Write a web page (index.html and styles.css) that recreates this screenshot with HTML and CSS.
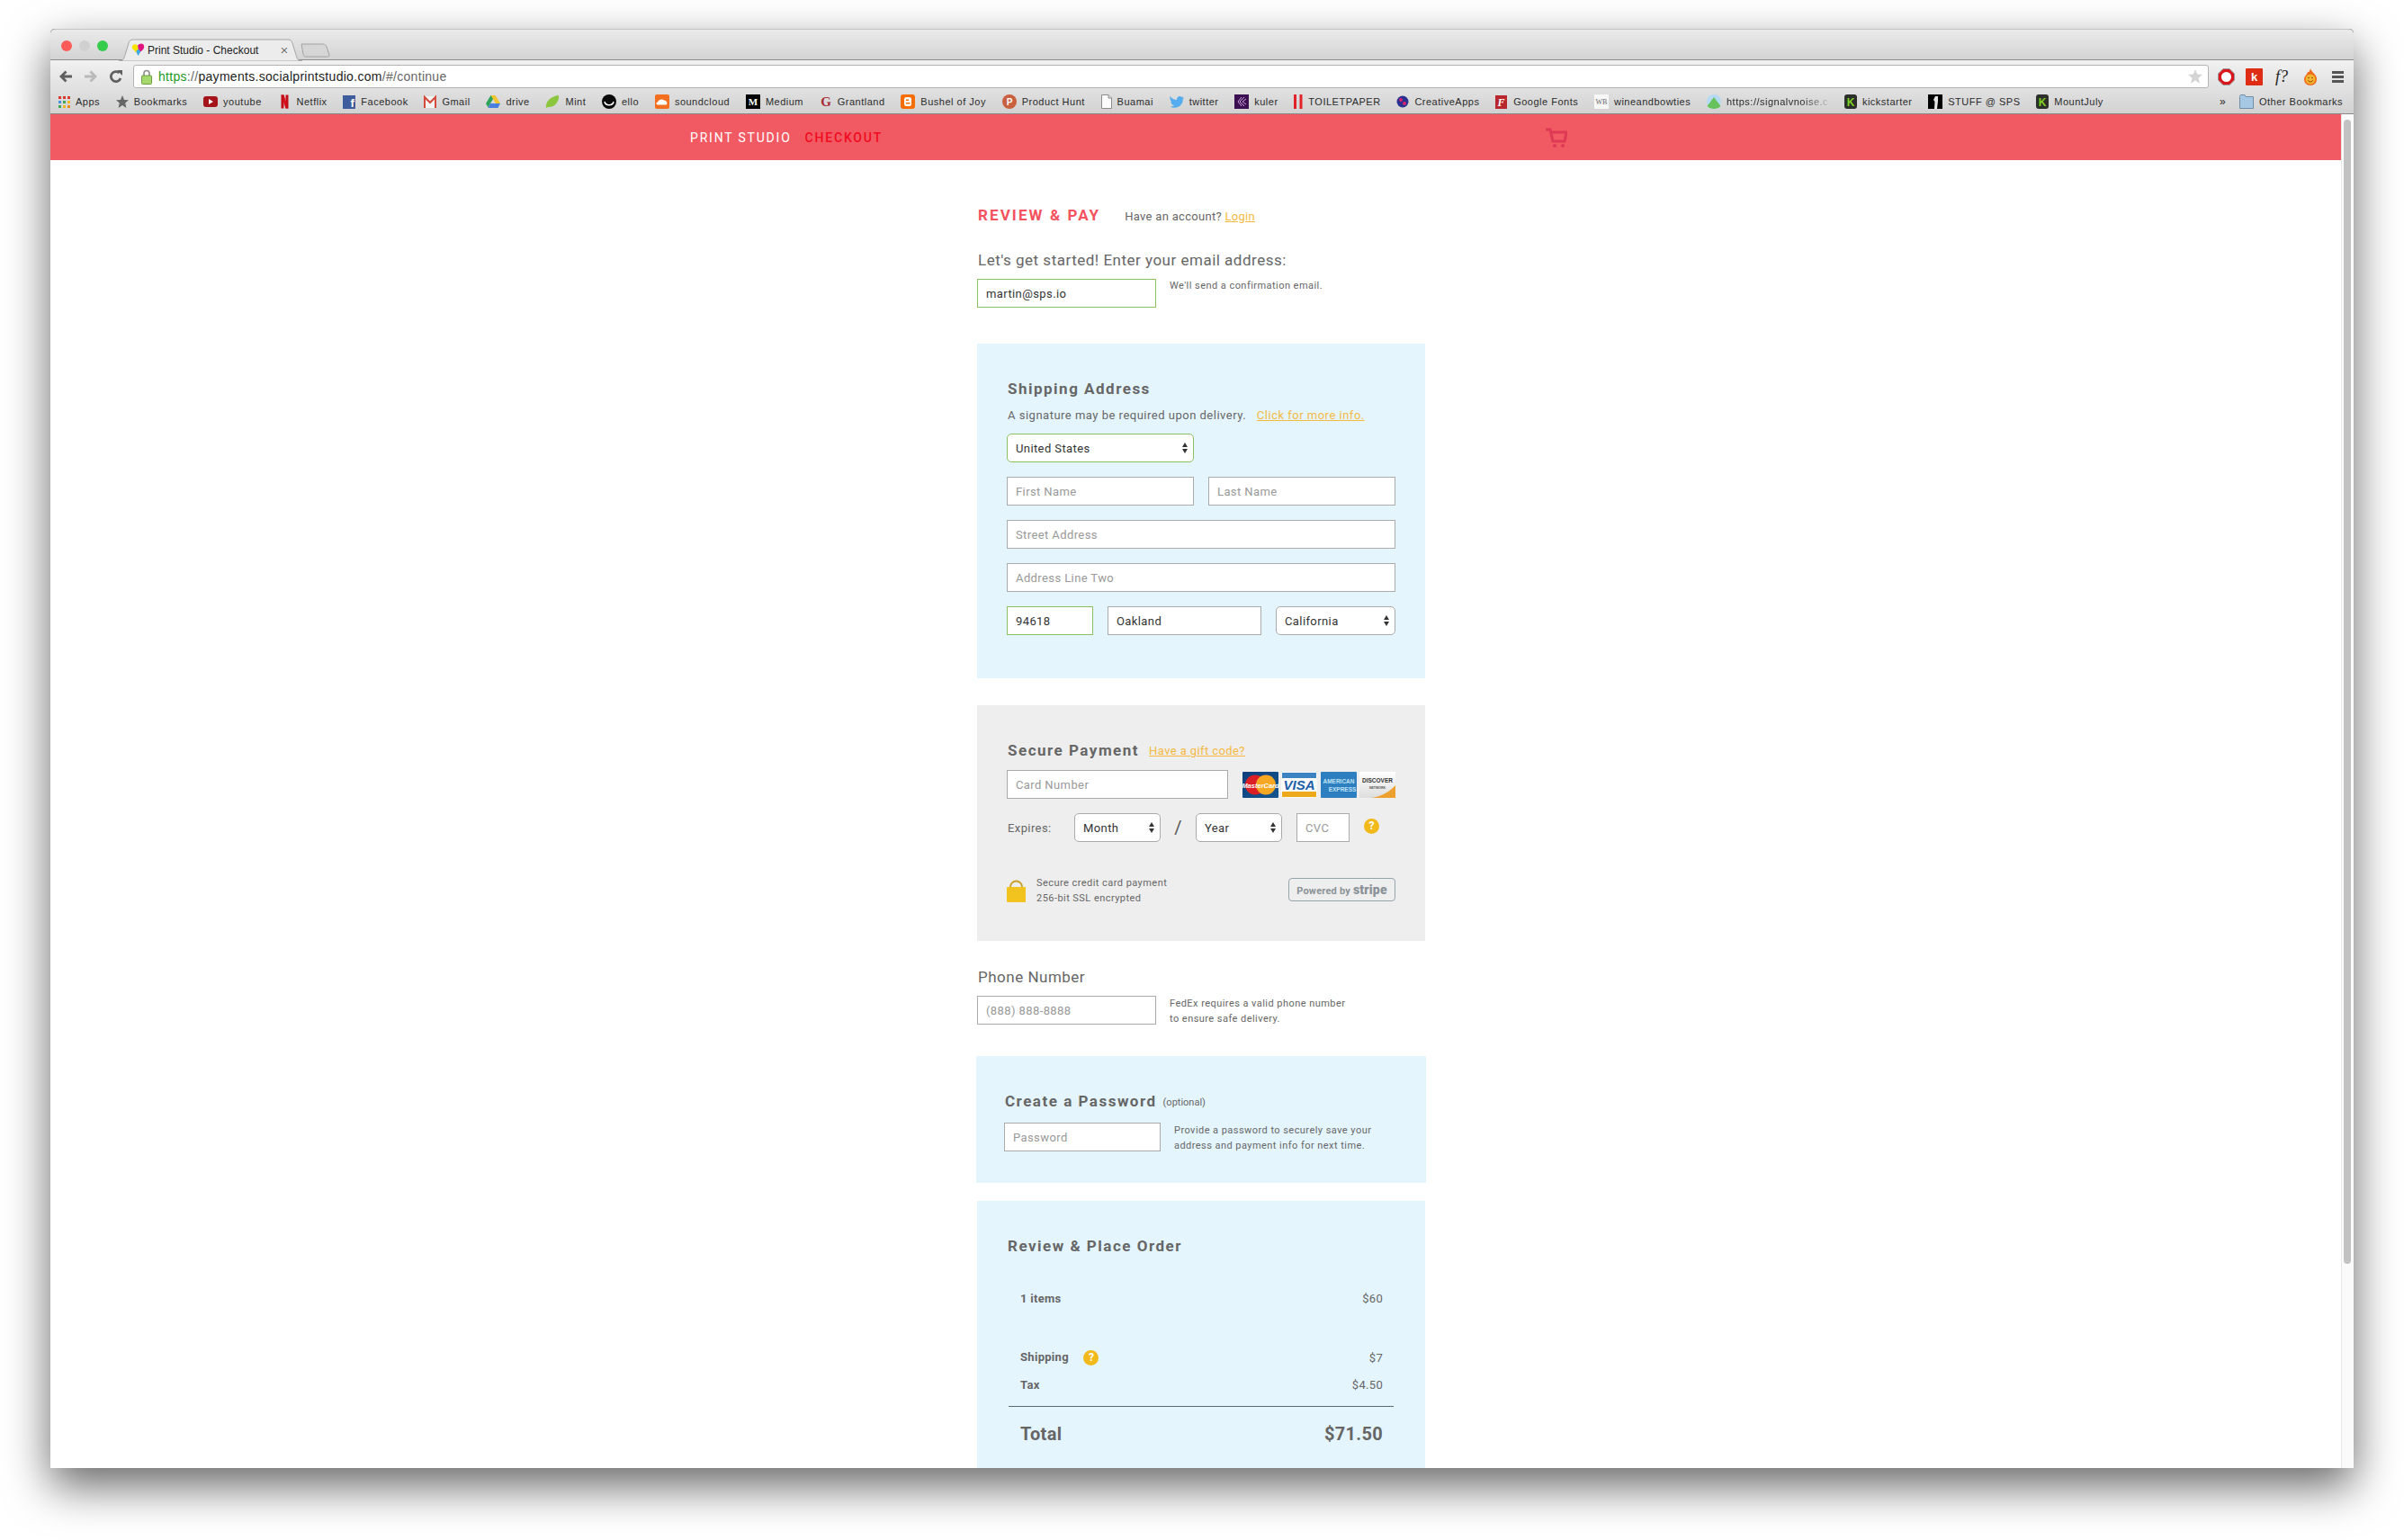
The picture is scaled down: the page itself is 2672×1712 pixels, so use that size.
FILE: index.html
```html
<!DOCTYPE html>
<html lang="en">
<head>
    <meta charset="UTF-8">
    <title>Print Studio - Checkout</title>
    <link rel="stylesheet" href="styles.css">
</head>
<body>
<div class="window">
    <div class="tabstrip">
        <div class="lights"><span class="light red"></span><span class="light grey"></span><span class="light green"></span></div>
        <div class="tab">
            <svg class="tab-shape" viewBox="0 0 204 25"><path d="M0 25 C5 25 6 22 7 18 L11 5 C12 2 13 1 16 1 L188 1 C191 1 192 2 193 5 L197 18 C198 22 199 25 204 25 Z" fill="#ececec" stroke="#a6a6a6"/></svg>
            <svg class="favicon" viewBox="0 0 16 16"><path d="M8 13 L1.500 7 C-1 3 4 -1 7.500 3 L8.500 8 Z" fill="#f7e200"/><path d="M7.500 3 C10 -1 16 0 15 5 C14.500 8 11 10 9 11 Z" fill="#e2127e"/><path d="M5.500 9.500 L8.500 7 L11 10 L8 15 Z" fill="#3fa9e6"/></svg>
            <span class="tab-title">Print Studio - Checkout</span>
            <span class="tab-close">&#215;</span>
        </div>
        <svg class="newtab" viewBox="0 0 33 16"><path d="M1 1 L25 1 C27 1 28 2 29 4 L32 13 C32 15 31 15 30 15 L6 15 C4 15 4 14 3 12 Z" fill="#d6d6d6" stroke="#a2a2a2"/></svg>
    </div>
    <div class="chrome">
        <div class="toolbar">
            <svg class="nav" viewBox="0 0 16 16"><path d="M15 8 H4 M8.500 2.500 L3 8 L8.500 13.500" fill="none" stroke="#5f5f5f" stroke-width="2.800"/></svg>
            <svg class="nav" viewBox="0 0 16 16"><path d="M1 8 H12 M7.500 2.500 L13 8 L7.500 13.500" fill="none" stroke="#b9b9b9" stroke-width="2.800"/></svg>
            <svg class="nav" viewBox="0 0 16 16"><path d="M13 10 A5.500 5.500 0 1 1 11.500 4" fill="none" stroke="#5f5f5f" stroke-width="2.800"/><path d="M9 1 L15 1 L15 7 Z" fill="#5f5f5f"/></svg>
            <div class="omnibox">
                <svg class="url-lock" viewBox="0 0 12 17"><path d="M3 8 V4.500 A3 3 0 0 1 9 4.500 V8" fill="none" stroke="#8b8b8b" stroke-width="1.600"/><rect x="0.500" y="7" width="11" height="9.500" rx="1" fill="#a5d86f" stroke="#6e9e43"/></svg>
                <span class="url"><span class="url-https">https</span><span class="url-dim">://</span>payments.socialprintstudio.com<span class="url-dim">/#/continue</span></span>
                <svg class="url-star" viewBox="0 0 16 16"><path d="M8 0 L10.200 5.500 L16 6 L11.500 9.800 L13 15.800 L8 12.600 L3 15.800 L4.500 9.800 L0 6 L5.800 5.500 Z" fill="#d4d4d4"/></svg>
            </div>
            <div class="extensions">
                <svg class="ext" viewBox="0 0 19 19"><path d="M6 0.500 H13 L18.500 6 V13 L13 18.500 H6 L0.500 13 V6 Z" fill="#d9161c" stroke="#999"/><circle cx="9.500" cy="9.500" r="5.500" fill="#fff"/></svg>
                <svg class="ext" viewBox="0 0 19 19"><rect width="19" height="19" rx="1" fill="#df2c14"/><text x="9.500" y="14" class="ext-k">k</text></svg>
                <span class="ext-f">f?</span>
                <svg class="ext-fire" viewBox="0 0 16 19"><path d="M8 0 C9 4 14 6 15 11 C15.500 16 12 19 8 19 C4 19 0.500 16 1 11 C2 8 4 7 5 4 C6 5 7 4 8 0 Z" fill="#ef6a1a"/><circle cx="8" cy="12" r="5.500" fill="#f5b52e"/><path d="M5 13 C6 15.500 10 15.500 11 13" fill="none" stroke="#8a4510"/><circle cx="6" cy="10.500" r="0.800" fill="#7a3b0c"/><circle cx="10" cy="10.500" r="0.800" fill="#7a3b0c"/></svg>
                <div class="menu"><span></span><span></span><span></span></div>
            </div>
        </div>
        <div class="bookmarks">
            <a class="bm"><svg class="ico ico-apps" viewBox="0 0 13 16"><rect y="2" width="3" height="3" fill="#d9382c"/><rect x="5" y="2" width="3" height="3" fill="#d9382c"/><rect x="10" y="2" width="3" height="3" fill="#d9382c"/><rect y="7" width="3" height="3" fill="#4a8fe0"/><rect x="5" y="7" width="3" height="3" fill="#3fa655"/><rect x="10" y="7" width="3" height="3" fill="#f2b721"/><rect y="12" width="3" height="3" fill="#3fa655"/><rect x="5" y="12" width="3" height="3" fill="#f2b721"/><rect x="10" y="12" width="3" height="3" fill="#e88a1c"/></svg>Apps</a>
            <a class="bm"><svg class="ico ico-star" viewBox="0 0 14 16"><path d="M7 1 L9 6 L14 6.300 L10.200 9.600 L11.400 15 L7 12 L2.600 15 L3.800 9.600 L0 6.300 L5 6 Z" fill="#666"/></svg>Bookmarks</a>
            <a class="bm"><svg class="ico" viewBox="0 0 16 16"><rect y="2" width="16" height="12" rx="3" fill="#a5141b"/><path d="M6 5 L11 8 L6 11 Z" fill="#fff"/></svg>youtube</a>
            <a class="bm"><svg class="ico ico-narrow" viewBox="0 0 9 16"><path d="M0.500 0.500 H3.500 L8.500 15.500 H5.500 Z" fill="#e0101c"/><rect x="0.500" y="0.500" width="3" height="15" fill="#c40d18"/><rect x="5.500" y="0.500" width="3" height="15" fill="#c40d18"/></svg>Netflix</a>
            <a class="bm"><svg class="ico ico-14" viewBox="0 0 14 16"><rect y="1" width="14" height="15" fill="#3f5c9c"/><text x="8.500" y="13.500" class="ico-fb">f</text></svg>Facebook</a>
            <a class="bm"><svg class="ico ico-14" viewBox="0 0 14 16"><rect y="2" width="14" height="13" fill="#f3f3f3"/><path d="M1 15 V3 L7 9 L13 3 V15" fill="none" stroke="#d5493a" stroke-width="2"/></svg>Gmail</a>
            <a class="bm"><svg class="ico" viewBox="0 0 16 16"><path d="M5.500 1 H10.500 L5 10 L2.500 14.500 L0 10 Z" fill="#2fa35a"/><path d="M5.500 1 H10.500 L16 10 H11 Z" fill="#f4c430"/><path d="M5 10 H16 L13.500 15 H2.500 Z" fill="#4a7fe0"/></svg>drive</a>
            <a class="bm"><svg class="ico" viewBox="0 0 16 16"><path d="M1 15 C0 8 6 2 15 1 C16 8 10 15 3 14 Z" fill="#8cc63f"/></svg>Mint</a>
            <a class="bm"><svg class="ico" viewBox="0 0 16 16"><circle cx="8" cy="8" r="8" fill="#0a0a0a"/><path d="M3 8 C4 13 12 13 13 8" fill="none" stroke="#fff" stroke-width="1.500"/></svg>ello</a>
            <a class="bm"><svg class="ico" viewBox="0 0 16 16"><rect width="16" height="16" rx="2" fill="#f26f1f"/><path d="M3 11.500 C1 11.500 1 8.500 3 8.500 C4 5.500 8 4.500 10 6.500 C13 6 15 11.500 12 11.500 Z" fill="#fff"/></svg>soundcloud</a>
            <a class="bm"><svg class="ico" viewBox="0 0 16 16"><rect width="16" height="16" fill="#000"/><text x="8" y="12" class="ico-m">M</text></svg>Medium</a>
            <a class="bm"><svg class="ico ico-14" viewBox="0 0 14 16"><text x="7" y="13" class="ico-g">G</text></svg>Grantland</a>
            <a class="bm"><svg class="ico" viewBox="0 0 16 16"><rect width="16" height="16" rx="3" fill="#f76d00"/><rect x="4" y="3" width="8" height="10" rx="2.500" fill="#fff"/><rect x="6" y="5.500" width="3" height="1.500" fill="#f76d00"/><rect x="6" y="9" width="4.500" height="1.500" fill="#f76d00"/></svg>Bushel of Joy</a>
            <a class="bm"><svg class="ico" viewBox="0 0 16 16"><circle cx="8" cy="8" r="8" fill="#c9603f"/><text x="8" y="12" class="ico-p">P</text></svg>Product Hunt</a>
            <a class="bm"><svg class="ico ico-12" viewBox="0 0 12 16"><path d="M0.500 0.500 H8 L11.500 4 V15.500 H0.500 Z" fill="#fbfbfb" stroke="#8c8c8c"/><path d="M8 0.500 V4 H11.500" fill="#ddd" stroke="#8c8c8c"/></svg>Buamai</a>
            <a class="bm"><svg class="ico" viewBox="0 0 16 16"><path d="M0.500 2 C2.500 4.500 5 6 8 6 C7.500 2.500 11.500 0.500 13.500 3 L15.500 2.500 L14.500 4.500 L16 4.300 L14.700 5.800 C15 11 10 16 3 14.500 C1.800 14.300 1 13.800 0.500 13.500 C2.500 13.600 4 13 5 12 C2.500 11.500 1.500 9.500 1.500 8.500 C1 8.300 1.500 8 2 8 C0.500 6 0 3.500 0.500 2 Z" fill="#55acee"/></svg>twitter</a>
            <a class="bm"><svg class="ico" viewBox="0 0 16 16"><rect width="16" height="16" fill="#3c0f52"/><path d="M11 3 L6 8 L11 13 M13 5 L9 8 L13 11 M8 3 L4 8 L8 13" fill="none" stroke="#c9a3d9" stroke-width="1"/></svg>kuler</a>
            <a class="bm"><svg class="ico ico-10" viewBox="0 0 10 16"><rect width="3" height="16" fill="#e3212a"/><rect x="6.500" width="3" height="16" fill="#e3212a"/></svg>TOILETPAPER</a>
            <a class="bm"><svg class="ico ico-14" viewBox="0 0 14 16"><circle cx="7" cy="8" r="6.500" fill="#2b2f8f"/><circle cx="5" cy="6" r="2" fill="#d6226f"/><circle cx="9" cy="10" r="2" fill="#d6226f"/></svg>CreativeApps</a>
            <a class="bm"><svg class="ico ico-14" viewBox="0 0 14 16"><rect y="1" width="13" height="15" fill="#b8272c"/><text x="6.500" y="13" class="ico-gf">F</text></svg>Google Fonts</a>
            <a class="bm"><svg class="ico" viewBox="0 0 16 16"><rect width="16" height="16" fill="#f7f7f7"/><text x="8" y="11" class="ico-wb">WB</text></svg>wineandbowties</a>
            <a class="bm"><svg class="ico" viewBox="0 0 16 16"><circle cx="8" cy="8" r="8" fill="#b6daf2"/><path d="M0.500 13 L5 7 L8 3 L11 7 L15.500 13 C12 17 4 17 0.500 13 Z" fill="#68c25c"/></svg><span class="bm-fade">https://signalvnoise.c</span></a>
            <a class="bm"><svg class="ico ico-14" viewBox="0 0 14 16"><rect width="14" height="16" rx="3" fill="#2d2f2a"/><text x="7" y="12.500" class="ico-ks">K</text></svg>kickstarter</a>
            <a class="bm"><svg class="ico" viewBox="0 0 16 16"><rect width="16" height="16" fill="#000"/><path d="M8 2 L11 2 L11 7 L10 16 L7 16 L7.500 8 L6 6 Z" fill="#e6e6e6"/></svg>STUFF @ SPS</a>
            <a class="bm"><svg class="ico ico-14" viewBox="0 0 14 16"><rect width="14" height="16" rx="3" fill="#2d2f2a"/><text x="7" y="12.500" class="ico-ks">K</text></svg>MountJuly</a>
            <span class="bm-more">&#187;</span>
            <a class="bm bm-other"><svg class="ico" viewBox="0 0 16 16"><path d="M0.500 2.500 C0.500 1 1 0.500 2 0.500 H6 L7 2.500 H15.500 V15.500 H0.500 Z" fill="#a7c8e4" stroke="#6f8ea8"/></svg>Other Bookmarks</a>
        </div>
    </div>

    <div class="viewport">
        <div class="page">
            <div class="topbar">
                <span class="brand">PRINT STUDIO</span>
                <span class="brand-red">CHECKOUT</span>
                <svg class="cart" viewBox="0 0 24 22"><path d="M0 2 H5 L8 15 H21 L23 5 H6" fill="none" stroke="#de3a55" stroke-width="3"/><circle cx="10" cy="20" r="2" fill="#de3a55"/><circle cx="19" cy="20" r="2" fill="#de3a55"/></svg>
            </div>
            <div class="column">
                <div class="review-head">
                    <h1>REVIEW &amp; PAY</h1>
                    <span class="account">Have an account? <a href="#">Login</a></span>
                </div>
                <div class="label label-email">Let's get started! Enter your email address:</div>
                <div class="field-row">
                    <input class="input input-side valid" type="text" value="martin@sps.io">
                    <p class="help help-email">We'll send a confirmation email.</p>
                </div>

                <section class="panel blue shipping">
                    <h2>Shipping Address</h2>
                    <p class="signature">A signature may be required upon delivery. <a href="#">Click for more info.</a></p>
                    <div class="select select-half valid"><select><option>United States</option></select></div>
                    <div class="row">
                        <input class="input grow" type="text" placeholder="First Name">
                        <input class="input grow" type="text" placeholder="Last Name">
                    </div>
                    <div class="row"><input class="input grow" type="text" placeholder="Street Address"></div>
                    <div class="row"><input class="input grow" type="text" placeholder="Address Line Two"></div>
                    <div class="row">
                        <input class="input input-zip valid" type="text" value="94618">
                        <input class="input input-city" type="text" value="Oakland">
                        <div class="select select-state"><select><option>California</option></select></div>
                    </div>
                </section>

                <section class="panel grey payment">
                    <div class="payment-title">
                        <h2>Secure Payment</h2>
                        <a href="#">Have a gift code?</a>
                    </div>
                    <div class="card-row">
                        <input class="input input-card" type="text" placeholder="Card Number">
                        <div class="cards">
                            <svg class="card" viewBox="0 0 40 29"><defs><linearGradient id="mc" x1="0" y1="0" x2="1" y2="1"><stop offset="0" stop-color="#0f3f7c"/><stop offset="1" stop-color="#14568f"/></linearGradient></defs><rect width="40" height="29" rx="1" fill="url(#mc)"/><circle cx="14" cy="14.500" r="11" fill="#dc1f26"/><circle cx="26" cy="14.500" r="11" fill="#f7a823"/><text x="20" y="17.500" class="card-mc">MasterCard</text></svg>
                            <svg class="card" viewBox="0 0 40 29"><rect width="40" height="29" fill="#fafafa"/><rect x="1" y="1" width="38" height="6" fill="#3c83c4"/><rect x="1" y="22" width="38" height="6" fill="#eda81c"/><text x="20" y="20" class="card-visa">VISA</text></svg>
                            <svg class="card" viewBox="0 0 40 29"><rect width="40" height="29" rx="1" fill="#2d7fc0"/><text x="20" y="13" class="card-amex">AMERICAN</text><text x="24" y="22" class="card-amex">EXPRESS</text></svg>
                            <svg class="card" viewBox="0 0 40 29"><defs><linearGradient id="dc" x1="0" y1="0" x2="0" y2="1"><stop offset="0" stop-color="#fff"/><stop offset="1" stop-color="#ddd"/></linearGradient></defs><rect width="40" height="29" fill="url(#dc)"/><path d="M12 29 C24 28 34 22 40 15 V29 Z" fill="#eea02e"/><text x="20" y="12" class="card-disc">DISCOVER</text><text x="20" y="19" class="card-net">NETWORK</text></svg>
                        </div>
                    </div>
                    <div class="expires-row">
                        <span class="expires">Expires:</span>
                        <div class="select select-date"><select><option>Month</option></select></div>
                        <span class="slash">/</span>
                        <div class="select select-date"><select><option>Year</option></select></div>
                        <input class="input input-cvc" type="text" placeholder="CVC">
                        <span class="qmark qmark-cvc">?</span>
                    </div>
                    <div class="secure-row">
                        <svg class="lock" viewBox="0 0 21 26"><path d="M4 12 V9 A6.500 6.500 0 0 1 17 9 V12" fill="none" stroke="#c9a029" stroke-width="2"/><rect y="9" width="21" height="17" rx="1" fill="#f2c31f"/></svg>
                        <p class="help secure-text">Secure credit card payment<br>256-bit SSL encrypted</p>
                        <div class="stripe">Powered by <b>stripe</b></div>
                    </div>
                </section>

                <div class="label label-phone">Phone Number</div>
                <div class="field-row field-row-phone">
                    <input class="input input-side" type="text" placeholder="(888) 888-8888">
                    <p class="help">FedEx requires a valid phone number<br>to ensure safe delivery.</p>
                </div>

                <section class="panel blue password">
                    <div class="password-title">
                        <h2>Create a Password</h2>
                        <span class="optional">(optional)</span>
                    </div>
                    <div class="field-row">
                        <input class="input input-pass" type="text" placeholder="Password">
                        <p class="help">Provide a password to securely save your<br>address and payment info for next time.</p>
                    </div>
                </section>

                <section class="panel blue review">
                    <h2>Review &amp; Place Order</h2>
                    <div class="line line-items"><span class="line-name">1 items</span><span>$60</span></div>
                    <div class="line line-shipping"><span class="line-name">Shipping <span class="qmark qmark-ship">?</span></span><span>$7</span></div>
                    <div class="line line-tax"><span class="line-name">Tax</span><span>$4.50</span></div>
                    <div class="total-rule"></div>
                    <div class="line line-total"><span>Total</span><span>$71.50</span></div>
                </section>
            </div>
        </div>
        <div class="scrollbar"><div class="thumb"></div></div>
    </div>
</div>
</body>
</html>
```

FILE: styles.css
```css
body {
    margin: 0;
    height: 1712px;
    overflow: hidden;
    background: #fff;
    font-family: Roboto, "Liberation Sans", sans-serif;
    color: #666;
}
h1, h2, p {
    margin: 0;
}
a {
    color: #f5b942;
    text-decoration: underline;
}

/* browser window */
.window {
    margin: 32px 0 0 56px;
    width: 2560px;
    height: 1600px;
    display: flex;
    flex-direction: column;
    background: #222;
    border-radius: 5px 5px 0 0;
    box-shadow: 0 20px 50px rgba(0, 0, 0, 0.6);
}
.tabstrip {
    height: 35px;
    display: flex;
    box-sizing: border-box;
    border-top: 1px solid #c4c4c4;
    border-bottom: 1px solid #8c8c8c;
    border-radius: 5px 5px 0 0;
    background: linear-gradient(#ebebeb, #d3d3d3);
    flex: none;
}
.lights {
    display: flex;
    gap: 8px;
    margin: 12px 0 0 12px;
}
.light {
    width: 12px;
    height: 12px;
    border-radius: 50%;
}
.light.red { background: #fc5b57; }
.light.grey { background: #d0d0d0; }
.light.green { background: #35cb4b; }
.tab {
    position: relative;
    width: 204px;
    height: 25px;
    margin: 10px 0 0 12px;
    display: flex;
    align-items: center;
    font: 12px "Liberation Sans", sans-serif;
    color: #222;
}
.tab-shape {
    position: absolute;
    left: 0;
    top: 0;
    width: 204px;
    height: 25px;
}
.favicon {
    position: relative;
    width: 15px;
    height: 15px;
    margin-left: 14px;
}
.tab-title {
    position: relative;
    margin-left: 3px;
    white-space: nowrap;
}
.tab-close {
    position: relative;
    margin-left: 24px;
    font-size: 15px;
    color: #777;
}
.newtab {
    width: 33px;
    height: 16px;
    margin: 15px 0 0 -2px;
}
.chrome {
    flex: none;
    height: 60px;
    box-sizing: border-box;
    background: linear-gradient(#f1f1f1, #d2d2d2);
    border-bottom: 1px solid #888;
}
.toolbar {
    height: 30px;
    padding: 3px 11px 0 9px;
    display: flex;
    align-items: center;
    gap: 12px;
}
.nav {
    width: 16px;
    height: 16px;
    flex: none;
}
.omnibox {
    flex: 1;
    height: 26px;
    margin-left: -1px;
    box-sizing: border-box;
    display: flex;
    align-items: center;
    background: #fff;
    border: 1px solid #b4b4b4;
    border-radius: 3px;
    font: 14px "Liberation Sans", sans-serif;
    letter-spacing: 0.3px;
    color: #222;
}
.url-lock {
    width: 12px;
    height: 17px;
    margin-left: 8px;
}
.url {
    margin-left: 7px;
    flex: 1;
}
.url-https { color: #1d9a1d; }
.url-dim { color: #666; }
.url-star {
    width: 16px;
    height: 16px;
    margin-right: 6px;
}
.extensions {
    display: flex;
    align-items: center;
    gap: 12px;
    margin-left: -2px;
}
.ext {
    width: 19px;
    height: 19px;
}
.ext-k {
    font: bold 13px "Liberation Sans", sans-serif;
    fill: #fff;
    text-anchor: middle;
}
.ext-f {
    width: 19px;
    padding-left: 2px;
    font: italic 18px "Liberation Serif", serif;
    color: #222;
}
.ext-fire {
    width: 16px;
    height: 19px;
    margin-right: 4px;
}
.menu {
    width: 13px;
    display: flex;
    flex-direction: column;
    gap: 2px;
}
.menu span {
    height: 3px;
    background: #555;
}

/* bookmarks bar */
.bookmarks {
    height: 26px;
    display: flex;
    align-items: center;
    padding-left: 9px;
    gap: 17.750px;
    font: 11px "Liberation Sans", sans-serif;
    letter-spacing: 0.5px;
    color: #2a2a2a;
    white-space: nowrap;
    position: relative;
}
.bm {
    display: flex;
    align-items: center;
    gap: 6px;
    color: #2a2a2a;
    text-decoration: none;
}
.ico {
    width: 16px;
    height: 16px;
    flex: none;
}
.ico-apps { width: 13px; }
.ico-star { width: 14px; }
.ico-narrow { width: 9px; margin: 0 3px; }
.ico-14 { width: 14px; }
.ico-12 { width: 12px; }
.ico-10 { width: 10px; }
.ico-fb { font: bold 13px "Liberation Sans", sans-serif; fill: #fff; letter-spacing: 0; }
.ico-m { font: bold 11px "Liberation Serif", serif; fill: #fff; text-anchor: middle; letter-spacing: 0; }
.ico-g { font: bold 15px "Liberation Serif", serif; fill: #a82a35; text-anchor: middle; letter-spacing: 0; }
.ico-p { font: bold 10px "Liberation Sans", sans-serif; fill: #fff; text-anchor: middle; letter-spacing: 0; }
.ico-gf { font: italic bold 12px "Liberation Serif", serif; fill: #fff; text-anchor: middle; letter-spacing: 0; }
.ico-wb { font: 8px "Liberation Serif", serif; fill: #666; text-anchor: middle; letter-spacing: 0; }
.ico-ks { font: bold 12px "Liberation Sans", sans-serif; fill: #7ed321; text-anchor: middle; letter-spacing: 0; }
.bm-fade {
    -webkit-mask-image: linear-gradient(90deg, #000 75%, rgba(0, 0, 0, 0.15));
    mask-image: linear-gradient(90deg, #000 75%, rgba(0, 0, 0, 0.15));
}
.bm-more {
    position: absolute;
    left: 2411px;
    font-size: 12px;
}
.bm-other {
    position: absolute;
    left: 2433px;
}

/* page inside the window */
.viewport {
    flex: 1;
    min-height: 0;
    display: flex;
    background: #fff;
}
.page {
    flex: 1;
    overflow: hidden;
}
.scrollbar {
    flex: none;
    width: 14px;
    box-sizing: border-box;
    background: #fafafa;
    border-left: 1px solid #e8e8e8;
    padding: 6px 3px 0 2px;
}
.thumb {
    height: 1272px;
    border-radius: 4px;
    background: #c2c2c2;
}
.topbar {
    height: 51px;
    background: #f25a63;
    display: flex;
    align-items: center;
    padding-left: 711px;
    font-size: 14px;
    letter-spacing: 1.8px;
}
.brand {
    color: #fff;
}
.brand-red {
    margin-left: 15px;
    color: #f00a1e;
    font-weight: 500;
}
.cart {
    width: 24px;
    height: 22px;
    margin-left: 737px;
}
.column {
    width: 498px;
    margin-left: 1030px;
}
.review-head {
    margin-top: 50px;
    height: 22px;
    display: flex;
    align-items: center;
}
.review-head h1 {
    margin-left: 1px;
    font-size: 17px;
    font-weight: 700;
    letter-spacing: 2.1px;
    color: #f4525e;
}
.account {
    margin: 2px 0 0 27px;
    font-size: 13px;
    letter-spacing: 0.3px;
}
.label {
    height: 20px;
    line-height: 20px;
    margin-left: 1px;
    font-size: 17px;
    letter-spacing: 0.5px;
}
.label-email {
    margin-top: 29px;
}
.label-phone {
    margin-top: 30px;
}
.field-row {
    display: flex;
    margin-top: 11px;
}
.field-row-phone {
    margin-bottom: 33px;
}
.help {
    font-size: 11px;
    line-height: 17px;
    letter-spacing: 0.45px;
    margin-left: 15px;
}
.help-email {
    line-height: 16px;
}

/* form controls */
.input {
    height: 32px;
    box-sizing: border-box;
    border: 1px solid #aaa;
    background: #fff;
    padding: 0 9px;
    font: 13px Roboto, sans-serif;
    letter-spacing: 0.4px;
    color: #333;
    border-radius: 0;
    outline: none;
}
.input::placeholder {
    color: #999;
    opacity: 1;
}
.input.valid,
.select.valid select {
    border-color: #8bc25f;
}
.grow {
    flex: 1;
    min-width: 0;
}
.input-side { width: 199px; }
.input-zip { width: 96px; }
.input-city { width: 171px; }
.input-card { width: 246px; }
.input-cvc { width: 59px; margin-left: 16px; }
.input-pass { width: 174px; }
.select {
    position: relative;
    height: 32px;
}
.select select {
    width: 100%;
    height: 32px;
    box-sizing: border-box;
    appearance: none;
    border: 1px solid #aaa;
    border-radius: 5px;
    background: #fff;
    padding: 0 9px;
    font: 13px Roboto, sans-serif;
    letter-spacing: 0.4px;
    color: #333;
    outline: none;
}
.select::before,
.select::after {
    content: "";
    position: absolute;
    right: 7px;
    border-left: 3.5px solid transparent;
    border-right: 3.5px solid transparent;
}
.select::before {
    top: 10px;
    border-bottom: 5px solid #333;
}
.select::after {
    bottom: 10px;
    border-top: 5px solid #333;
}
.select-half { width: 208px; margin-top: 11px; }
.select-state { width: 133px; }
.select-date { width: 96px; }

/* panels */
.panel {
    box-sizing: border-box;
    padding: 39px 33px 0;
}
.panel.blue { background: #e5f5fe; }
.panel.grey { background: #eee; }
.panel h2 {
    font-size: 17px;
    line-height: 22px;
    font-weight: 700;
    letter-spacing: 1.5px;
    color: #666;
    margin-left: 1px;
}
.shipping {
    margin-top: 40px;
    height: 372px;
}
.signature {
    margin: 10px 0 0 1px;
    font-size: 13px;
    line-height: 18px;
    letter-spacing: 0.5px;
}
.signature a {
    margin-left: 8px;
}
.row {
    display: flex;
    gap: 16px;
    margin-top: 16px;
}
.payment {
    margin-top: 30px;
    height: 262px;
}
.payment-title {
    display: flex;
    align-items: center;
    gap: 11px;
}
.payment-title a {
    font-size: 13px;
    letter-spacing: 0.4px;
}
.card-row {
    display: flex;
    align-items: center;
    margin-top: 11px;
}
.cards {
    display: flex;
    gap: 3.300px;
    margin-left: 16px;
}
.card {
    width: 40px;
    height: 29px;
}
.card-mc { font: italic bold 7.5px "Liberation Sans", sans-serif; fill: #fff; text-anchor: middle; }
.card-visa { font: italic bold 15px "Liberation Sans", sans-serif; fill: #1c5fa8; text-anchor: middle; }
.card-amex { font: bold 6.5px "Liberation Sans", sans-serif; fill: #bfe3f7; text-anchor: middle; }
.card-disc { font: bold 6.5px "Liberation Sans", sans-serif; fill: #333; text-anchor: middle; }
.card-net { font: bold 3.5px "Liberation Sans", sans-serif; fill: #555; text-anchor: middle; }
.expires-row {
    display: flex;
    align-items: center;
    margin-top: 16px;
}
.expires {
    width: 74px;
    margin-left: 1px;
    font-size: 13px;
    letter-spacing: 0.4px;
}
.slash {
    width: 39px;
    text-align: center;
    font-size: 20px;
    color: #555;
}
.qmark {
    display: inline-block;
    width: 17px;
    height: 17px;
    line-height: 17px;
    border-radius: 50%;
    background: #f2b91b;
    color: #fff;
    font-size: 12px;
    font-weight: 700;
    text-align: center;
    letter-spacing: 0;
}
.qmark-cvc {
    margin: -4px 0 0 16px;
}
.secure-row {
    display: flex;
    align-items: center;
    height: 34px;
    margin-top: 37px;
}
.lock {
    width: 21px;
    height: 26px;
}
.secure-text {
    margin-left: 12px;
    flex: 1;
}
.stripe {
    width: 119px;
    height: 26px;
    margin-top: -3px;
    line-height: 24px;
    box-sizing: border-box;
    border: 1px solid #95a5ad;
    border-radius: 4px;
    text-align: center;
    font-size: 11px;
    font-weight: 700;
    letter-spacing: 0.2px;
    color: #8a9297;
}
.stripe b {
    font-size: 14px;
}
.password {
    width: 500px;
    height: 141px;
    margin-left: -1px;
    padding: 39px 0 0 31px;
}
.password-title {
    display: flex;
    align-items: center;
    gap: 7px;
    margin-bottom: 13px;
}
.optional {
    font-size: 11px;
    margin-top: 3px;
}
.password .field-row {
    margin-top: 0;
}
.review {
    margin-top: 20px;
    padding: 39px 33px 60px;
}
.line {
    display: flex;
    justify-content: space-between;
    align-items: center;
    height: 20px;
    padding: 0 14px 0 15px;
    font-size: 13px;
    letter-spacing: 0.3px;
}
.line-name {
    font-weight: 700;
    font-size: 13px;
}
.line-items { margin-top: 37px; }
.line-shipping { margin-top: 46px; }
.line-tax { margin-top: 10px; }
.qmark-ship {
    margin-left: 13px;
}
.total-rule {
    height: 1px;
    margin: 14px 2px 0;
    background: #5f6a70;
}
.line-total {
    height: 28px;
    margin-top: 16px;
    font-size: 20px;
    font-weight: 700;
    letter-spacing: 0.3px;
}
```
